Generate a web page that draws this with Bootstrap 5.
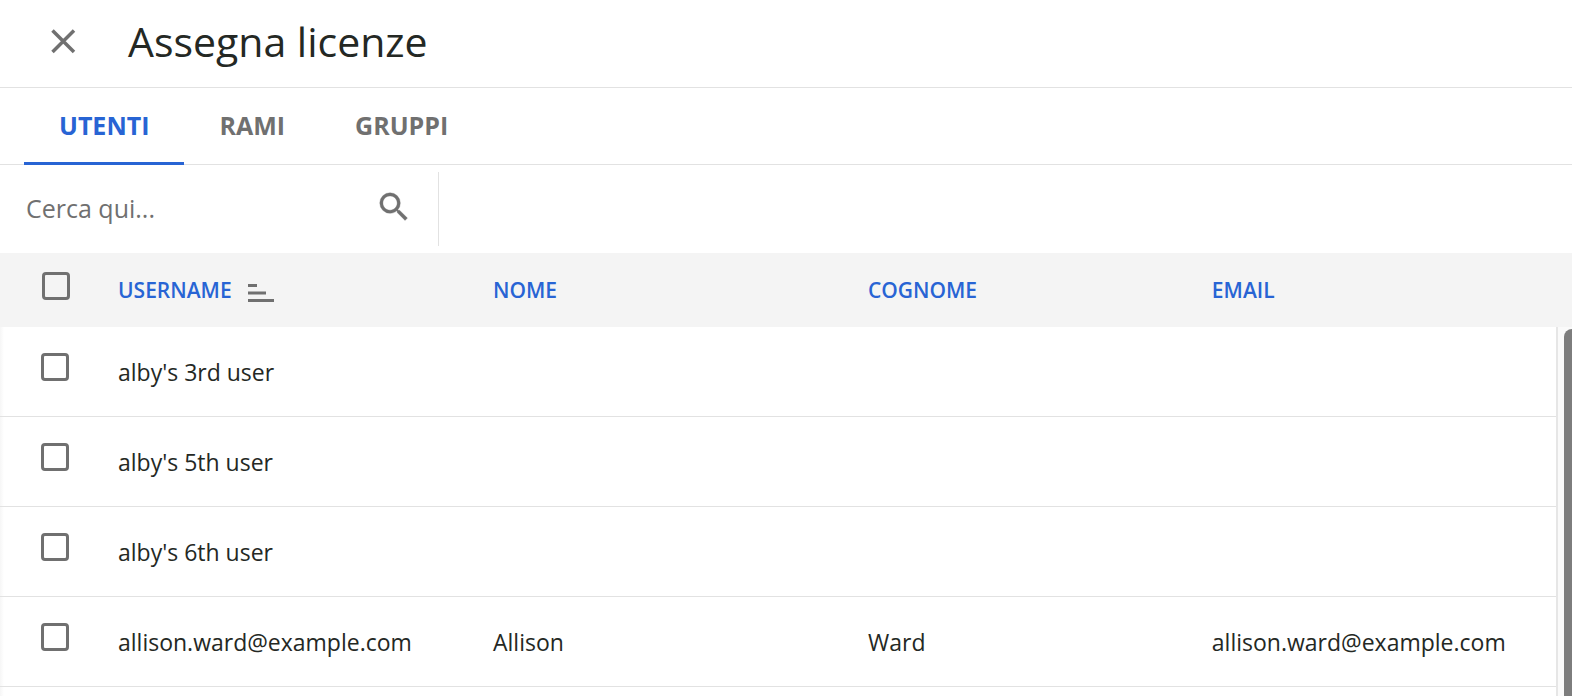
<!DOCTYPE html>
<html lang="it">
<head>
<meta charset="utf-8">
<meta name="viewport" content="width=device-width, initial-scale=1">
<title>Assegna licenze</title>
<link href="https://cdn.jsdelivr.net/npm/bootstrap@5.3.0/dist/css/bootstrap.min.css" rel="stylesheet">
<style>
  :root { --accent: #2864d4; --ink: #242824; --muted-ink: #707070; --rule: #e2e2e2; --head: #f4f4f4; }
  body { font-family: "Open Sans", "Noto Sans", sans-serif; color: var(--ink); background: #fff; }
  .rule-bottom { border-bottom: 1px solid var(--rule); }
  .bare { border: 0; background: none; padding: 0; color: var(--muted-ink); line-height: 0; }
  .topbar { height: 88px; padding: 0 48px 4px; gap: 48px; }
  .topbar h1 { font-size: 41px; line-height: 56px; font-weight: 400; padding-bottom: 2px; }
  .tabs { height: 77px; padding: 0 24px; }
  .tabs button { font-size: 25px; font-weight: 700; line-height: 32px; padding: 0 35px; color: var(--muted-ink); margin-bottom: -1px; border-bottom: 3px solid transparent; }
  .tabs button.active { color: var(--accent); border-bottom-color: var(--accent); }
  .searchbar { height: 88px; padding: 7px 0; }
  .searchbox { width: 439px; padding: 0 25px 0 26px; border-right: 1px solid var(--rule); }
  .searchbox input { border: 0; outline: 0; min-width: 0; padding: 0 0 2px; font-size: 25px; line-height: 32px; color: var(--ink); }
  .searchbox input::placeholder { color: var(--muted-ink); opacity: 1; }
  .searchbox .bare { padding-bottom: 4px; }
  .listing { background: linear-gradient(to right, #f6f6f6, #fff 4px); }
  .users { table-layout: fixed; width: 100%; border-collapse: separate; border-spacing: 0; }
  .users th, .users td { padding: 0; vertical-align: middle; white-space: nowrap; }
  .users thead th { height: 74px; background: var(--head); color: var(--accent); font-size: 21px; line-height: 32px; font-weight: 600; }
  .users tbody td { height: 90px; border-bottom: 1px solid var(--rule); font-size: 23px; line-height: 32px; }
  .users .tick { padding: 0 0 10px 41px; line-height: 0; }
  .users thead .tick { padding: 0 0 8px 42px; }
  .users input { appearance: none; width: 28px; height: 28px; margin: 0; border: 3px solid var(--muted-ink); border-radius: 4px; }
  .users input:checked { background: var(--accent); }
  .sort-icon { padding-top: 6px; box-sizing: content-box; }
  .col-tick { width: 118px; }
  .col-wide { width: 24.1%; }
  .col-mid { width: 22.1%; }
  .scroller { width: 16px; }
  .scroller-cap { height: 74px; background: var(--head); }
  .scroller-track { background: #fafafa; border-left: 2px solid #e6e6e6; padding: 2px 0 0 6px; }
  .scroller-thumb { background: #7d7d7d; border-radius: 8px 0 0 0; }
</style>
</head>
<body>
<div class="d-flex flex-column vh-100 overflow-hidden">
  <header class="topbar rule-bottom d-flex align-items-center flex-shrink-0">
    <button class="bare" type="button" aria-label="Chiudi">
      <svg width="32" height="32" viewBox="0 0 32 32" fill="none" stroke="currentColor" stroke-width="3.500"><path d="M4.500 4.500 26 26M26 4.500 4.500 26"/></svg>
    </button>
    <h1 class="m-0">Assegna licenze</h1>
  </header>

  <nav class="tabs rule-bottom d-flex align-items-stretch flex-shrink-0" role="tablist">
    <button class="bare active" type="button" role="tab" aria-selected="true">UTENTI</button>
    <button class="bare" type="button" role="tab" aria-selected="false">RAMI</button>
    <button class="bare" type="button" role="tab" aria-selected="false">GRUPPI</button>
  </nav>

  <div class="searchbar d-flex flex-shrink-0">
    <form class="searchbox d-flex align-items-center">
      <input class="flex-grow-1" type="text" placeholder="Cerca qui..." aria-label="Cerca qui">
      <button class="bare" type="button" aria-label="Cerca">
        <svg width="38" height="38" viewBox="0 0 24 24" fill="currentColor" stroke="currentColor" stroke-width=".2"><path d="M15.500 14h-.79l-.28-.27A6.471 6.471 0 0 0 16 9.500 6.500 6.500 0 1 0 9.500 16c1.610 0 3.090-.59 4.230-1.570l.27.28v.79l5 4.990L20.490 19l-4.990-5zm-6 0C7.010 14 5 11.990 5 9.500S7.010 5 9.500 5 14 7.010 14 9.500 11.990 14 9.500 14z"/></svg>
      </button>
    </form>
  </div>

  <main class="d-flex flex-grow-1 overflow-hidden">
    <div class="listing flex-grow-1 overflow-hidden">
      <table class="users">
        <colgroup><col class="col-tick"><col class="col-wide"><col class="col-wide"><col class="col-mid"><col></colgroup>
        <thead>
          <tr>
            <th class="tick"><input type="checkbox" aria-label="Seleziona tutti"></th>
            <th><span class="d-flex align-items-center gap-3">USERNAME
              <svg class="sort-icon" width="26" height="18" viewBox="0 0 26 18" fill="#707070" aria-hidden="true"><path d="M0 0h9v3H0zM0 7.500h18v3H0zM0 15h26v3H0z"/></svg></span></th>
            <th>NOME</th><th>COGNOME</th><th>EMAIL</th>
          </tr>
        </thead>
        <tbody>
          <tr><td class="tick"><input type="checkbox" aria-label="Seleziona alby's 3rd user"></td><td>alby's 3rd user</td><td></td><td></td><td></td></tr>
          <tr><td class="tick"><input type="checkbox" aria-label="Seleziona alby's 5th user"></td><td>alby's 5th user</td><td></td><td></td><td></td></tr>
          <tr><td class="tick"><input type="checkbox" aria-label="Seleziona alby's 6th user"></td><td>alby's 6th user</td><td></td><td></td><td></td></tr>
          <tr><td class="tick"><input type="checkbox" aria-label="Seleziona allison.ward@example.com"></td><td>allison.ward@example.com</td><td>Allison</td><td>Ward</td><td>allison.ward@example.com</td></tr>
        </tbody>
      </table>
    </div>
    <div class="scroller d-flex flex-column flex-shrink-0" aria-hidden="true">
      <div class="scroller-cap"></div>
      <div class="scroller-track flex-grow-1 d-flex"><div class="scroller-thumb flex-grow-1"></div></div>
    </div>
  </main>
</div>
<script src="https://cdn.jsdelivr.net/npm/bootstrap@5.3.0/dist/js/bootstrap.bundle.min.js"></script>
</body>
</html>
